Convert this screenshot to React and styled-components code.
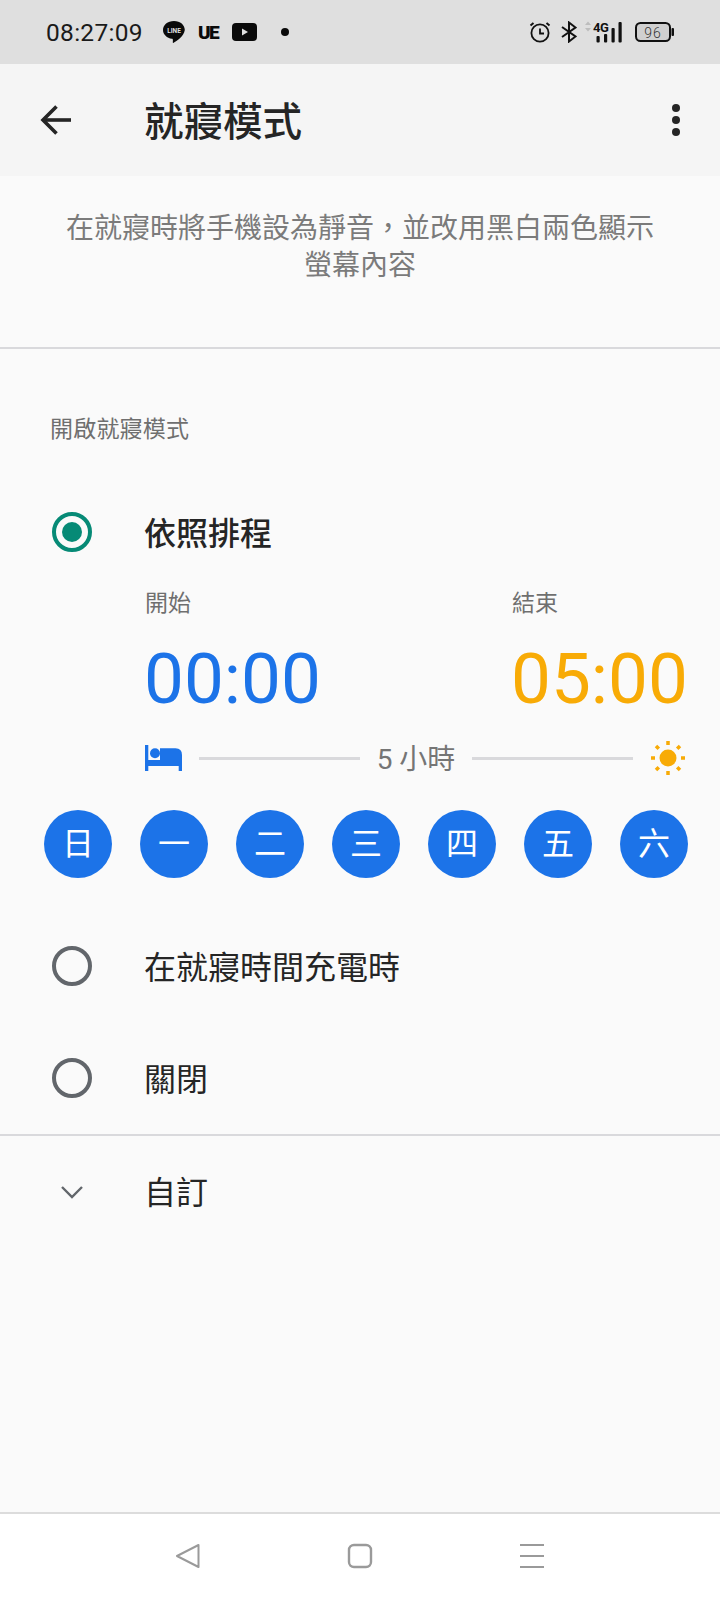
import React from 'react';
import styled, { createGlobalStyle } from 'styled-components';

const GlobalStyle = createGlobalStyle`
  html, body { margin: 0; padding: 0; background: #fafafa; }
  * { box-sizing: border-box; }
`;

const Screen = styled.div`
  width: 720px;
  height: 1600px;
  display: flex;
  flex-direction: column;
  overflow: hidden;
  background: #fafafa;
  color: #252525;
  font-family: "Roboto", "Noto Sans CJK TC", sans-serif;
`;

const StatusBar = styled.div`
  height: 64px;
  flex: none;
  background: #dfdfdf;
  display: flex;
  align-items: center;
  justify-content: space-between;
  padding: 0 46px 0 46px;
`;

const StatusGroup = styled.div`
  display: flex;
  align-items: center;
`;

const Clock = styled.span`
  font-size: 24.5px;
  letter-spacing: 0.3px;
  color: #1a1a1a;
  margin-right: 19px;
`;

const Toolbar = styled.div`
  height: 112px;
  flex: none;
  background: #f5f5f5;
  display: flex;
  align-items: center;
  padding: 0 39px 0 38px;
`;

const Title = styled.h1`
  margin: 6px 0 0 72px;
  flex: 1;
  font-size: 39.5px;
  font-weight: 500;
  line-height: 1;
`;

const Description = styled.p`
  margin: 0;
  height: 173px;
  flex: none;
  padding: 34px 60px 0;
  text-align: center;
  font-size: 28px;
  line-height: 37px;
  color: #7b7b7b;
  border-bottom: 2px solid #d9d9dc;
`;

const SectionLabel = styled.div`
  margin: 65px 0 0 50px;
  font-size: 23px;
  line-height: 32px;
  color: #6f6f6f;
  letter-spacing: 0.2px;
`;

const OptionRow = styled.div`
  display: flex;
  align-items: center;
  height: ${(p) => p.$height}px;
  margin-top: ${(p) => p.$top || 0}px;
  padding-left: 52px;
`;

const Radio = styled.span`
  width: 40px;
  height: 40px;
  flex: none;
  border-radius: 50%;
  border: 4px solid ${(p) => (p.$checked ? '#068a76' : '#62666b')};
  display: flex;
  align-items: center;
  justify-content: center;

  &::after {
    content: '';
    display: ${(p) => (p.$checked ? 'block' : 'none')};
    width: 20px;
    height: 20px;
    border-radius: 50%;
    background: #068a76;
  }
`;

const OptionText = styled.span`
  margin: 3px 0 0 ${(p) => p.$left || 52}px;
  font-size: 32px;
  line-height: 1;
  font-weight: ${(p) => (p.$strong ? 500 : 400)};
`;

const Schedule = styled.div`
  padding: 0 32px 0 145px;
`;

const TimeColumns = styled.div`
  display: grid;
  grid-template-columns: 367px 1fr;
`;

const TimeLabel = styled.div`
  font-size: 23px;
  line-height: 32px;
  margin-top: -1px;
  color: #6f6f6f;
`;

const TimeValue = styled.div`
  font-size: 71px;
  line-height: 84px;
  margin: 17px 0 0 -1px;
  color: ${(p) => p.$color};
`;

const Duration = styled.div`
  margin-top: 16px;
  display: flex;
  align-items: center;
  height: 42px;
`;

const Track = styled.span`
  flex: 1;
  height: 3px;
  background: #d9d9dc;
  margin: ${(p) => p.$margin};
`;

const DurationText = styled.span`
  font-size: 28px;
  color: #757575;
  line-height: 1;
  margin-top: 3px;
`;

const Days = styled.div`
  margin-top: 31px;
  padding: 0 32px 0 44px;
  display: flex;
  justify-content: space-between;
`;

const Day = styled.span`
  width: 68px;
  height: 68px;
  border-radius: 50%;
  background: #1c73e8;
  color: #fff;
  font-size: 32px;
  line-height: 1;
  display: flex;
  align-items: center;
  justify-content: center;
`;

const Divider = styled.div`
  height: 2px;
  flex: none;
  background: #d9d9dc;
`;

const CustomRow = styled.div`
  display: flex;
  align-items: center;
  height: 111px;
  padding-left: 61px;
`;

const Spacer = styled.div`
  flex: 1;
`;

const NavBar = styled.div`
  height: 88px;
  flex: none;
  background: #fff;
  border-top: 2px solid #dcdcdc;
  display: flex;
  align-items: center;
  padding: 0 0 2px 175px;
  gap: 146px;
`;

const ArrowLeft = () => (
  <svg width="34" height="34" viewBox="0 0 34 34" fill="none" stroke="#252525" strokeWidth="3.6">
    <path d="M33 17H5" />
    <path d="M18.500 3.500 5 17l13.500 13.500" />
  </svg>
);

const Kebab = () => (
  <svg width="10" height="34" viewBox="0 0 10 34" fill="#252525">
    <circle cx="5" cy="5" r="4" />
    <circle cx="5" cy="17" r="4" />
    <circle cx="5" cy="29" r="4" />
  </svg>
);

const LineIcon = () => (
  <svg width="24" height="24" viewBox="0 0 24 24" style={{ marginRight: 12 }}>
    <path d="M12 1C5.700 1 1 4.900 1 10c0 4.600 3.900 8.100 9 8.800.4.100.9.4.9 1.200l-.1 2.600c0 .4.4.5.8.2 2.800-1.700 10.400-6.300 11.200-12.800C22.800 4.900 18.300 1 12 1z" fill="#0a0a0a" />
    <text x="12" y="12.500" textAnchor="middle" fontSize="6.500" fontWeight="700" fill="#dfdfdf" fontFamily="Roboto">LINE</text>
  </svg>
);

const UeIcon = styled.span`
  font-size: 19px;
  font-weight: 900;
  letter-spacing: -1.4px;
  color: #0a0a0a;
  width: 34px;
`;

const YoutubeIcon = () => (
  <svg width="25" height="18" viewBox="0 0 25 18">
    <rect width="25" height="18" rx="4" fill="#0a0a0a" />
    <path d="M10 5.500v7l6-3.500z" fill="#dfdfdf" />
  </svg>
);

const NoticeDot = styled.span`
  width: 8px;
  height: 8px;
  border-radius: 50%;
  background: #0a0a0a;
  margin-left: 24px;
`;

const AlarmIcon = () => (
  <svg width="22" height="22" viewBox="0 0 22 22" fill="none" stroke="#111" strokeWidth="1.800">
    <circle cx="11" cy="12" r="8.600" />
    <path d="M11 7.500V12.500H15" />
    <path d="M1.500 4.500 4.500 2M20.500 4.500 17.500 2" strokeWidth="2" />
  </svg>
);

const BluetoothIcon = () => (
  <svg width="16" height="22" viewBox="0 0 16 22" fill="none" stroke="#111" strokeWidth="2" style={{ marginLeft: 10 }}>
    <path d="M1 6 14.500 15.500 8 20.500V1.500L14.500 6.500 1 16" />
  </svg>
);

const SignalIcon = () => (
  <svg width="38" height="22" viewBox="0 0 38 22" style={{ marginLeft: 8 }}>
    <path d="M3 0.500 6 4H0zM3 10.500 6 7H0z" fill="#bdbdbd" />
    <text x="8" y="11" fontSize="13" fontWeight="700" fill="#111" fontFamily="Roboto" letterSpacing="-0.5">4G</text>
    <rect x="11.500" y="15" width="3.200" height="6.500" rx="1" fill="#111" />
    <rect x="19" y="13" width="3.200" height="8.500" rx="1" fill="#111" />
    <rect x="26.500" y="7" width="3.200" height="14.500" rx="1" fill="#111" />
    <rect x="33.500" y="1" width="3.200" height="20.500" rx="1" fill="#111" />
  </svg>
);

const BatteryIcon = () => (
  <svg width="39" height="20" viewBox="0 0 39 20" style={{ marginLeft: 12 }}>
    <rect x="1" y="1" width="34" height="18" rx="4.500" fill="#d0d0d0" stroke="#111" strokeWidth="2" />
    <rect x="36.500" y="6" width="2.500" height="8" rx="1" fill="#111" />
    <text x="18" y="15.500" textAnchor="middle" fontSize="14" fontWeight="300" fill="#333" fontFamily="Roboto" letterSpacing="1">96</text>
  </svg>
);

const BedIcon = () => (
  <svg width="37" height="26" viewBox="0 0 37 26" fill="#1c73e8" style={{ marginRight: 17 }}>
    <path d="M0 0h3.300v15H15V3.300h15.500Q37 3.300 37 10v16h-3.300v-5H3.300v5H0z" />
    <circle cx="10" cy="8.300" r="5" />
  </svg>
);

const SunIcon = () => (
  <svg width="34" height="34" viewBox="0 0 34 34" fill="#f8ab06" style={{ marginLeft: 18, marginRight: 3 }}>
    <circle cx="17" cy="17" r="8.500" />
    <g stroke="#f8ab06" strokeWidth="3.500">
      <path d="M17 0v4M17 30v4M0 17h4M30 17h4M5 5l2.800 2.800M26.200 26.200 29 29M29 5l-2.800 2.800M7.800 26.200 5 29" />
    </g>
  </svg>
);

const ChevronDown = () => (
  <svg width="22" height="14" viewBox="0 0 22 14" fill="none" stroke="#62666b" strokeWidth="2.400">
    <path d="M1 2 11 12 21 2" />
  </svg>
);

const NavBack = () => (
  <svg width="26" height="26" viewBox="0 0 26 26" fill="none" stroke="#9a9a9a" strokeWidth="2" strokeLinejoin="round">
    <path d="M23.500 2 2 13l21.500 11z" />
  </svg>
);

const NavHome = () => (
  <svg width="26" height="26" viewBox="0 0 26 26" fill="none" stroke="#9a9a9a" strokeWidth="2.400">
    <rect x="2" y="2" width="22" height="22" rx="5" />
  </svg>
);

const NavMenu = () => (
  <svg width="26" height="26" viewBox="0 0 26 26" stroke="#9a9a9a" strokeWidth="2.200">
    <path d="M1 2h24M1 13h24M1 24h24" />
  </svg>
);

const DAYS = ['日', '一', '二', '三', '四', '五', '六'];

const App = () => (
  <Screen>
    <GlobalStyle />
    <StatusBar>
      <StatusGroup>
        <Clock>08:27:09</Clock>
        <LineIcon />
        <UeIcon>UE</UeIcon>
        <YoutubeIcon />
        <NoticeDot />
      </StatusGroup>
      <StatusGroup>
        <AlarmIcon />
        <BluetoothIcon />
        <SignalIcon />
        <BatteryIcon />
      </StatusGroup>
    </StatusBar>
    <Toolbar>
      <ArrowLeft />
      <Title>就寢模式</Title>
      <Kebab />
    </Toolbar>
    <Description>在就寢時將手機設為靜音，並改用黑白兩色顯示螢幕內容</Description>
    <SectionLabel>開啟就寢模式</SectionLabel>
    <OptionRow $height={114} $top={29}>
      <Radio $checked />
      <OptionText $strong>依照排程</OptionText>
    </OptionRow>
    <Schedule>
      <TimeColumns>
        <div>
          <TimeLabel>開始</TimeLabel>
          <TimeValue $color="#1c73e8">00:00</TimeValue>
        </div>
        <div>
          <TimeLabel>結束</TimeLabel>
          <TimeValue $color="#f8ab06">05:00</TimeValue>
        </div>
      </TimeColumns>
      <Duration>
        <BedIcon />
        <Track $margin="0 17px 0 0" />
        <DurationText>5 小時</DurationText>
        <Track $margin="0 0 0 17px" />
        <SunIcon />
      </Duration>
    </Schedule>
    <Days>
      {DAYS.map((day) => (
        <Day key={day}>{day}</Day>
      ))}
    </Days>
    <OptionRow $height={112} $top={32}>
      <Radio />
      <OptionText>在就寢時間充電時</OptionText>
    </OptionRow>
    <OptionRow $height={112}>
      <Radio />
      <OptionText>關閉</OptionText>
    </OptionRow>
    <Divider />
    <CustomRow>
      <ChevronDown />
      <OptionText $left={61}>自訂</OptionText>
    </CustomRow>
    <Spacer />
    <NavBar>
      <NavBack />
      <NavHome />
      <NavMenu />
    </NavBar>
  </Screen>
);

export default App;
